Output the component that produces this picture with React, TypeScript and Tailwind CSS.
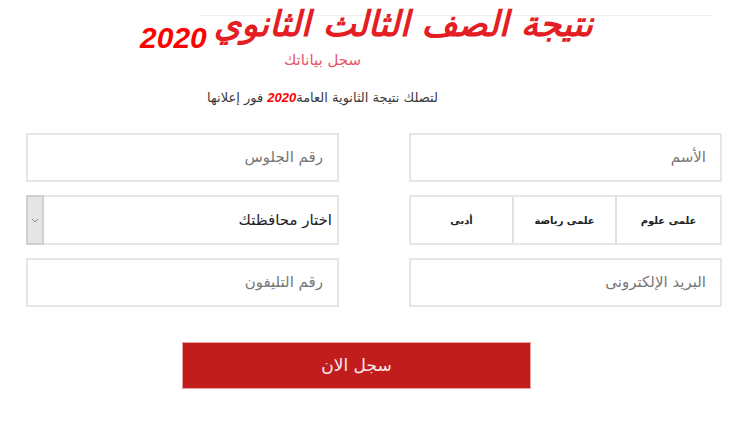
import React from "react";

const arabic = { fontFamily: '"DejaVu Sans", sans-serif' };
const latin = { fontFamily: '"Liberation Sans", sans-serif' };

const Field = ({ placeholder }: { placeholder: string }) => (
  <div className="flex h-[49px] items-center border-2 border-[#e6e6e6] bg-white pr-[14px] text-[15px] text-[#777]">
    {placeholder}
  </div>
);

const App = () => {
  return (
    <div dir="rtl" className="relative h-[425px] w-[731px] overflow-hidden bg-white" style={arabic}>
      {/* header */}
      <div className="ml-[200px] mr-[19px] mt-[15px] border-t border-[#f0f0f0]" />
      <div className="-mt-[14px] flex items-start justify-center gap-[7px] pl-[2px]">
        <h1 className="text-[35px] font-bold italic leading-[44px] text-[#e41e25]">
          نتيجة الصف الثالث الثانوي
        </h1>
        <span className="mt-[19px] text-[30px] font-bold italic leading-[34px] text-[#f00]" style={latin}>
          2020
        </span>
      </div>
      <div className="-mt-[5px] flex flex-col items-center pr-[86px]">
        <p className="text-[15px] leading-[20px] text-[#e8546a]">سجل بياناتك</p>
        <p className="mt-[19px] text-[13px] leading-[18px] text-[#3a3a3a]">
          لتصلك نتيجة الثانوية العامة
          <span className="font-bold italic text-[#f00]" style={latin}>
            2020
          </span>{" "}
          فور إعلانها
        </p>
      </div>

      {/* form */}
      <div className="ml-[9px] mr-[9px] mt-[26px] grid grid-cols-[313px_313px] gap-x-[70px] gap-y-[13px]">
        <Field placeholder="الأسم" />
        <Field placeholder="رقم الجلوس" />

        <div className="grid h-[50px] grid-cols-3 border-2 border-[#e6e6e6] text-[10px] font-bold text-[#222]">
          <div className="flex items-center justify-center">علمى علوم</div>
          <div className="flex items-center justify-center border-r-2 border-[#e0e0e0]">علمى رياضة</div>
          <div className="flex items-center justify-center border-r-2 border-[#e0e0e0]">أدبى</div>
        </div>

        <div className="flex h-[50px] items-stretch border-2 border-[#e6e6e6] bg-white text-[15px] text-[#222]">
          <div className="flex flex-1 items-center pr-[5px]">اختار محافظتك</div>
          <div className="-m-[2px] flex w-[18px] items-center justify-center border-2 border-[#d0d0d0] bg-[#e5e5e5]">
            <svg width="8" height="5" viewBox="0 0 8 5" fill="none">
              <path d="M1 1l3 3 3-3" stroke="#888" strokeWidth="1" />
            </svg>
          </div>
        </div>

        <Field placeholder="البريد الإلكترونى" />
        <Field placeholder="رقم التليفون" />
      </div>

      <div className="mt-[35px] flex justify-start pr-[200px]">
        <button className="h-[47px] w-[349px] border border-[#e8a0a0] bg-[#c21d1d] text-[17px] text-[#fbe9ee]">
          سجل الان
        </button>
      </div>
    </div>
  );
};

export default App;
